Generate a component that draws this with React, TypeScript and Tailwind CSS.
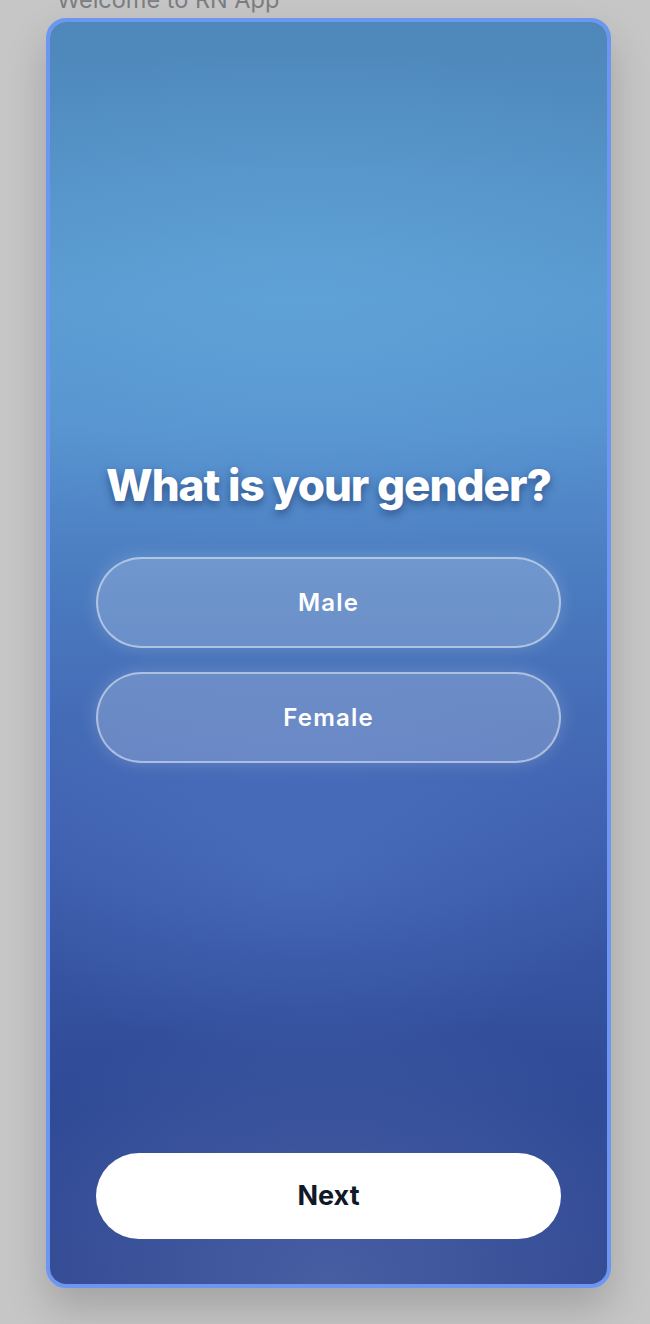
import { useState } from "react";

const options = ["Male", "Female"];

export default function App() {
  const [selected, setSelected] = useState<string | null>(null);

  return (
    <div className="min-h-[1324px] bg-[#c6c6c6] font-['Inter',sans-serif] overflow-hidden">
      <div className="-mt-[13px] pl-[57px] text-[23.5px] leading-[26px] text-[#7c7c80]">
        Welcome to RN App
      </div>

      {/* Phone frame */}
      <div className="ml-[46px] mt-[5px] w-[565px] h-[1270px] rounded-[20px] border-4 border-[#6b97f2] overflow-hidden shadow-[0_20px_40px_rgba(0,0,0,0.18)]">
        <div className="relative flex h-full flex-col bg-[radial-gradient(ellipse_70%_22%_at_50%_100%,rgba(110,130,190,0.4),transparent),radial-gradient(ellipse_60%_15%_at_45%_67%,rgba(90,130,210,0.35),transparent),radial-gradient(ellipse_80%_20%_at_45%_22%,rgba(110,180,230,0.35),transparent),linear-gradient(180deg,#4e87ba_0%,#5899cf_22%,#5692cf_32%,#4a7abf_45%,#4163b1_62%,#3654a2_74%,#2f4a96_86%,#2e4690_100%)] px-[46px]">
          <h1 className="mt-[436px] text-center text-[44px] leading-[54px] font-extrabold tracking-[-1px] text-white [text-shadow:0_4px_8px_rgba(20,40,90,0.55)]">
            What is your gender?
          </h1>

          <div className="mt-[45px] flex flex-col gap-[24px]">
            {options.map((opt) => (
              <button
                key={opt}
                onClick={() => setSelected(opt)}
                className={`h-[91px] w-full rounded-full border-2 border-white/45 text-[24px] font-semibold tracking-[1.2px] text-white shadow-[0_0_18px_rgba(255,255,255,0.18)] ${
                  selected === opt ? "bg-white/35" : "bg-white/20"
                }`}
              >
                {opt}
              </button>
            ))}
          </div>

          <div className="flex-1" />

          <button className="mb-[45px] h-[86px] w-full rounded-full bg-white text-[27px] font-bold text-[#111827]">
            Next
          </button>
        </div>
      </div>
    </div>
  );
}
